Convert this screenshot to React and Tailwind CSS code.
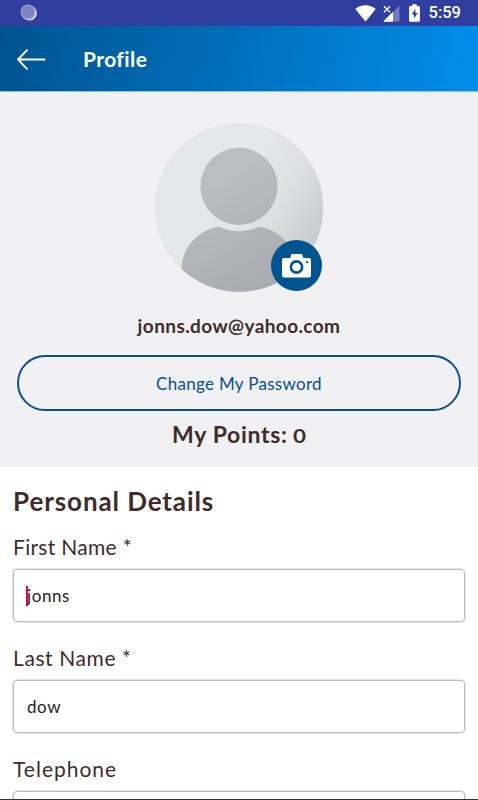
import { useState } from "react";

const StatusBar = () => {
  return (
    <div className="flex h-[26px] shrink-0 items-center justify-between bg-[#303e9f] pl-5 pr-[17px]">
      <svg width="18" height="18" viewBox="0 0 18 18">
        <circle cx="9.3" cy="9" r="7.6" fill="#dfe3f3" />
        <circle cx="8" cy="8" r="7.4" fill="#7c84c4" />
        <circle cx="8" cy="8" r="6.8" fill="none" stroke="#a9afda" strokeWidth="1.3" strokeDasharray="1.2 0.9" />
      </svg>
      <div className="flex items-center">
        <svg width="21" height="17" viewBox="0 0 21 17" fill="#fff">
          <path d="M10.5 16.5 0.3 3.9C3 1.8 6.5 0.3 10.5 0.3s7.5 1.5 10.2 3.6z" />
        </svg>
        <svg className="ml-[7px]" width="17" height="17" viewBox="0 0 17 17">
          <path d="M16.5 0.5v16H0.5z" fill="#737cbd" />
          <path d="M9.8 7v9.5H0.5z" fill="#fff" />
          <path d="M0 0h8v8H0z" fill="#303e9f" />
          <path d="M9.8 7v9.5H0.5z" fill="#fff" />
          <path d="m1 1.2 6 6M7 1.2l-6 6" stroke="#fff" strokeWidth="1.3" />
        </svg>
        <svg className="ml-[9px]" width="11" height="18" viewBox="0 0 11 18">
          <path d="M3.3 0.3h4.4v1.8h2.2q1 0 1 1v13.6q0 1-1 1H1.1q-1 0-1-1V3.1q0-1 1-1h2.2z" fill="#fff" />
          <path d="M6.4 4.8 2.7 10.6h2.2v4.2l3.7-5.9H6.4z" fill="#303e9f" />
        </svg>
        <span className="ml-[9px] font-[Roboto] text-[16.5px] font-medium leading-[26px] text-white">5:59</span>
      </div>
    </div>
  )
}

const Header = () => {
  return (
    <header className="flex h-[66px] shrink-0 items-center border-b border-[#8fbfe4] bg-linear-[105deg,#00538d_0%,#0070bd_50%,#048dea_100%] pl-[17px] text-white">
      <svg width="30" height="22" viewBox="0 0 30 22" fill="none" stroke="#fff" strokeWidth="1.8" strokeLinecap="round" strokeLinejoin="round">
        <path d="M27.5 11.5H1M10 2.2 1 11.5l9 9.3" />
      </svg>
      <h1 className="ml-[36px] text-[21px] font-bold leading-6 tracking-[0.4px]">Profile</h1>
    </header>
  )
}

const Avatar = () => {
  return (
    <div className="relative h-[169px] w-[169px]">
      <svg width="169" height="169" viewBox="0 0 169 169">
        <defs>
          <linearGradient id="disc" gradientUnits="userSpaceOnUse" x1="70" y1="50" x2="165" y2="105">
            <stop offset="0.2" stopColor="#e6e7e9" />
            <stop offset="0.6" stopColor="#dddee0" />
            <stop offset="1" stopColor="#cbccce" />
          </linearGradient>
          <linearGradient id="person" gradientUnits="userSpaceOnUse" x1="45" y1="30" x2="125" y2="165">
            <stop offset="0.2" stopColor="#bcbdc1" />
            <stop offset="1" stopColor="#a9aaaf" />
          </linearGradient>
          <clipPath id="round">
            <circle cx="84" cy="84.5" r="84.3" />
          </clipPath>
        </defs>
        <circle cx="84" cy="84.5" r="84.3" fill="url(#disc)" />
        <g clipPath="url(#round)" fill="url(#person)">
          <circle cx="84" cy="63.3" r="38.6" />
          <path d="M26.5 147C26.5 126 41.5 107 64 103.7Q84 112.6 104 103.7C126.5 107 141.5 126 141.5 147V169H26.5z" />
        </g>
      </svg>
      <button className="absolute left-[116px] top-[117px] flex h-[51px] w-[51px] items-center justify-center rounded-full bg-[#00558f]">
        <svg width="29" height="24" viewBox="0 0 29 24">
          <path d="M2 4h6.2l1-3q.4-1 1.4-1h8.4q1 0 1.4 1l1 3H27q2 0 2 2v15.5q0 2-2 2H2q-2 0-2-2V6q0-2 2-2z" fill="#fff" />
          <circle cx="14.5" cy="13" r="5.6" fill="none" stroke="#00558f" strokeWidth="2.6" />
          <circle cx="25" cy="8.2" r="1.1" fill="#00558f" />
        </svg>
      </button>
    </div>
  )
}

const Field = ({ label, value, onChange, labelClass, focused }) => {
  return (
    <div className="flex h-[111px] shrink-0 flex-col">
      <label className={`text-[21px] leading-6 ${labelClass}`}>{label}</label>
      <div className="relative mt-[10px]">
        {focused && <span className="absolute left-[13px] top-[17px] h-[20px] w-[2px] bg-[#e0005c]"></span>}
        <input
          type="text"
          value={value}
          onChange={onChange}
          className="relative h-[53px] w-full rounded-[4px] border border-[#bcbcbc] bg-transparent px-[13px] text-[17px] tracking-[0.6px] text-[#222] shadow-[0_0_0_0.5px_#cccccc] outline-none"
        />
      </div>
    </div>
  )
}

const App = () => {
  const [ user, setUser ] = useState({
    firstName: 'jonns',
    lastName: 'dow',
    telephone: ''
  })

  const onFieldChange = (name) => (event) => {
    setUser({
      ...user,
      [name]: event.target.value
    })
  }

  return (
    <div className="flex h-[800px] w-full flex-col overflow-hidden border-b border-[#333] bg-white font-[Lato,sans-serif] text-[#3e2c2a]">
      <StatusBar />
      <Header />
      <section className="flex h-[375px] shrink-0 flex-col items-center bg-[#f1f1f4] px-[17px] pt-[31px]">
        <Avatar />
        <p className="mt-[22px] text-[19px] font-bold leading-6 tracking-[0.4px]">jonns.dow@yahoo.com</p>
        <button className="mt-[17px] h-[56px] w-full rounded-full border-2 border-[#064f91] pt-px text-[17px] tracking-[0.3px] text-[#064f91]">Change My Password</button>
        <p className="mt-2 text-[23px] font-bold leading-[30px] tracking-[0.7px]">
          My Points: <span className="inline-block origin-bottom scale-x-115 text-[19.5px] leading-none">0</span>
        </p>
      </section>
      <section className="flex min-h-0 flex-1 flex-col overflow-hidden px-[13px] pt-[18px]">
        <h2 className="shrink-0 text-[26px] font-bold leading-8 tracking-[0.9px]">Personal Details</h2>
        <div className="mt-[18px] flex flex-col">
          <Field label="First Name *" labelClass="tracking-[0.3px]" value={user.firstName} onChange={onFieldChange('firstName')} focused />
          <Field label="Last Name *" labelClass="tracking-[0.6px]" value={user.lastName} onChange={onFieldChange('lastName')} />
          <Field label="Telephone" labelClass="tracking-[1px]" value={user.telephone} onChange={onFieldChange('telephone')} />
        </div>
      </section>
    </div>
  )
}

export default App
